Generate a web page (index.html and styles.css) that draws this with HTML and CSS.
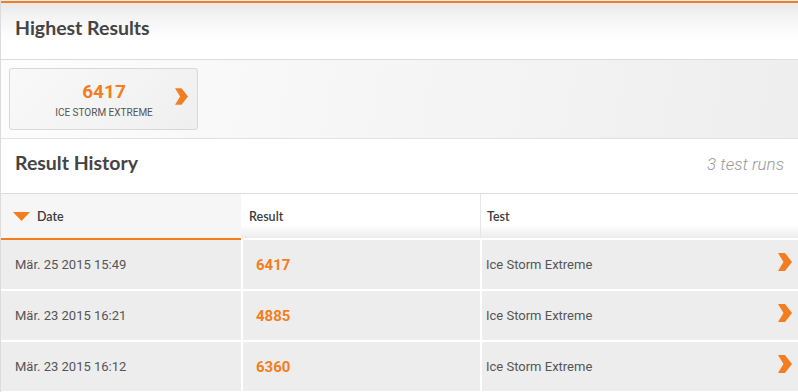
FILE: index.html
```html
<!DOCTYPE html>
<html lang="de">
<head>
<meta charset="utf-8">
<title>Results</title>
<link rel="stylesheet" href="styles.css">
</head>
<body>
<div class="page">
  <div class="accent"></div>
  <header class="panel-head">
    <h2 class="title">Highest Results</h2>
  </header>
  <section class="best">
    <a class="best-card" href="#">
      <span class="card-spacer"></span>
      <span class="card-body">
        <span class="card-score">6417</span>
        <span class="card-name">ICE STORM EXTREME</span>
      </span>
      <svg class="chev card-chev" viewBox="0 0 14 18" aria-hidden="true"><polygon points="0,0 7,0 14,9 7,18 0,18 5.5,9"/></svg>
    </a>
  </section>
  <div class="history-head">
    <h2 class="title">Result History</h2>
    <span class="runs">3 test runs</span>
  </div>
  <div class="thead">
    <div class="th th-date"><svg class="sort-tri" viewBox="0 0 17 9" aria-hidden="true"><polygon points="0,0 17,0 8.5,9"/></svg>Date</div>
    <div class="th th-result">Result</div>
    <div class="th th-test">Test</div>
  </div>
  <div class="tbody">
    <div class="row">
      <div class="td td-date">Mär. 25 2015 15:49</div>
      <div class="td td-score">6417</div>
      <div class="td td-test"><span>Ice Storm Extreme</span><svg class="chev row-chev" viewBox="0 0 14 18" aria-hidden="true"><polygon points="0,0 7,0 14,9 7,18 0,18 5.5,9"/></svg></div>
    </div>
    <div class="row">
      <div class="td td-date">Mär. 23 2015 16:21</div>
      <div class="td td-score">4885</div>
      <div class="td td-test"><span>Ice Storm Extreme</span><svg class="chev row-chev" viewBox="0 0 14 18" aria-hidden="true"><polygon points="0,0 7,0 14,9 7,18 0,18 5.5,9"/></svg></div>
    </div>
    <div class="row">
      <div class="td td-date">Mär. 23 2015 16:12</div>
      <div class="td td-score">6360</div>
      <div class="td td-test"><span>Ice Storm Extreme</span><svg class="chev row-chev" viewBox="0 0 14 18" aria-hidden="true"><polygon points="0,0 7,0 14,9 7,18 0,18 5.5,9"/></svg></div>
    </div>
  </div>
</div>
</body>
</html>
```
FILE: styles.css
```css
* { box-sizing: border-box; }
html, body { margin: 0; padding: 0; background: #fff; }
body { font-family: Roboto, "Liberation Sans", sans-serif; }

.page {
  width: 798px;
  height: 392px;
  overflow: hidden;
  border-left: 1px solid #dcdcdc;
  background: #fff;
}

.accent {
  height: 3px;
  border-top: 1px solid #ececec;
  background: #f47d20;
}

.title {
  margin: 0;
  font-family: Lato, "Liberation Sans", sans-serif;
  font-weight: 700;
  font-size: 19.5px;
  line-height: 22px;
  color: #444;
}

.panel-head {
  height: 57px;
  padding: 14px 0 0 14px;
  border-bottom: 1px solid #dcdcdc;
  background: linear-gradient(#e8e8e8 0, #f3f3f3 12px, #fbfbfb 28px, #fff 40px);
}

.best {
  height: 79px;
  padding: 8px 0 0 8px;
  border-bottom: 1px solid #e2e2e2;
  background: linear-gradient(100deg, #fdfdfd 0%, #f6f6f6 45%, #eeeeee 100%);
}

.best-card {
  display: grid;
  grid-template-columns: 13px 1fr 13px;
  width: 189px;
  height: 62px;
  padding: 0 9px 0 10px;
  border: 1px solid #d8d8d8;
  border-radius: 3px;
  background: linear-gradient(135deg, #f9f9f9 0%, #efefef 100%);
  text-decoration: none;
}

.card-body {
  display: flex;
  flex-direction: column;
  align-items: center;
  padding-top: 12px;
}

.card-score {
  font-weight: 700;
  font-size: 19px;
  line-height: 22px;
  color: #f47d20;
}

.card-name {
  margin-top: 3px;
  font-size: 10px;
  line-height: 14px;
  color: #555;
}

.chev { fill: #f47d20; display: block; }

.card-chev {
  width: 13px;
  height: 17px;
  margin-top: 19px;
}

.history-head {
  display: flex;
  align-items: baseline;
  justify-content: space-between;
  height: 55px;
  padding: 13px 14px 0 14px;
  border-bottom: 1px solid #dcdcdc;
}

.runs {
  font-style: italic;
  font-weight: 300;
  font-size: 17px;
  color: #999;
}

.thead {
  display: grid;
  grid-template-columns: 240px 239px 1fr;
  height: 46px;
}

.th {
  display: flex;
  align-items: center;
  font-family: Lato, "Liberation Sans", sans-serif;
  font-weight: 600;
  font-size: 12.5px;
  color: #3c3c3c;
  border-bottom: 2px solid #fff;
  background: linear-gradient(#fff 0, #fff 70%, #ececec 100%);
}

.th-date {
  padding-left: 12px;
  background: #f6f6f6;
  border-bottom-color: #f47d20;
}

.sort-tri {
  width: 17px;
  height: 9px;
  margin-right: 7px;
  fill: #f47d20;
  display: block;
}

.th-result { padding-left: 8px; }

.th-test {
  padding-left: 7px;
  box-shadow: inset 1px 0 0 #e6e6e6;
}

.tbody {
  display: grid;
  grid-auto-rows: 49px;
  row-gap: 2px;
}

.row {
  display: grid;
  grid-template-columns: 240px 237px 1fr;
  column-gap: 2px;
}

.td {
  display: flex;
  align-items: center;
  background: #ededed;
  font-size: 13px;
  color: #555;
}

.td-date { padding-left: 14px; }

.td-score {
  padding-left: 13px;
  font-weight: 700;
  font-size: 15px;
  color: #f47d20;
}

.td-test {
  justify-content: space-between;
  padding: 0 6px 0 4px;
}

.row-chev {
  width: 14px;
  height: 18px;
  margin-bottom: 5px;
}
```
